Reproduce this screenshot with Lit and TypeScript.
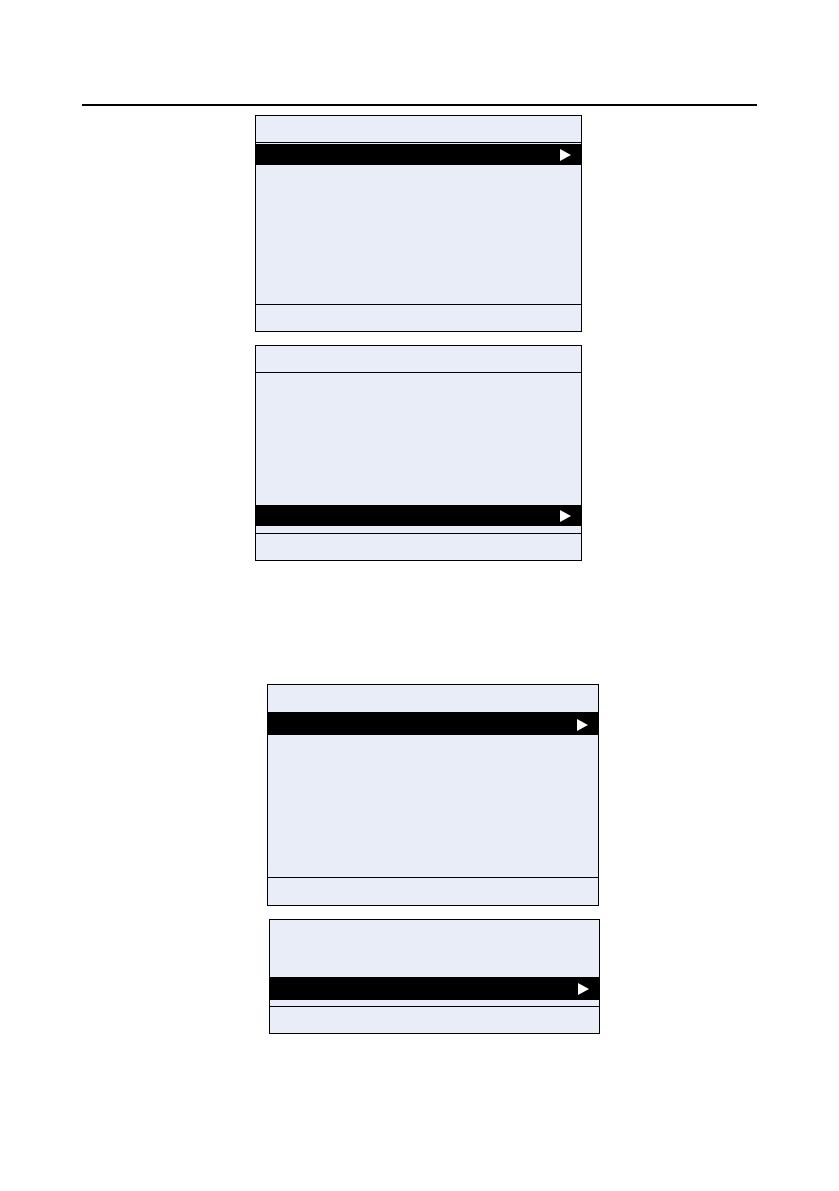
import { LitElement, html, css, nothing } from "lit";
import { customElement, property } from "lit/decorators.js";

/** One menu display: optional title bar, a list with a highlighted row, a softkey bar. */
@customElement("menu-display")
class MenuDisplay extends LitElement {
  @property({ type: Boolean }) titled = false;
  @property() label = "";

  static styles = css`
    :host {
      display: flex;
      flex-direction: column;
      box-sizing: border-box;
      border: 1px solid #000;
      background: #e8edf8;
    }
    .title {
      height: var(--title-height, 26px);
      border-bottom: 1px solid #000;
    }
    .before {
      height: var(--before, 0);
    }
    .after {
      height: var(--after, 0);
    }
    .softkeys {
      height: var(--softkeys-height, 26px);
      border-top: 1px solid #000;
    }
    .row {
      display: flex;
      align-items: center;
      justify-content: flex-end;
      width: 100%;
      height: var(--row-height, 21px);
      margin: 0;
      padding: 0 10px;
      border: 0;
      background: #000;
      color: #fff;
    }
    .arrow {
      display: block;
      width: 11px;
      height: 13px;
      fill: currentColor;
    }
  `;

  render() {
    return html`
      ${this.titled ? html`<header class="title"></header>` : nothing}
      <div class="before"></div>
      <button class="row" type="button" aria-label=${this.label}>
        <svg class="arrow" viewBox="0 0 11 13" aria-hidden="true">
          <path d="M0 1 11 7 0 13z" />
        </svg>
      </button>
      <div class="after"></div>
      <footer class="softkeys"></footer>
    `;
  }
}

@customElement("app-root")
class AppRoot extends LitElement {
  static styles = css`
    :host {
      display: block;
      box-sizing: border-box;
      min-height: 100vh;
      padding: 104px 82px 157px;
      background: #fff;
      font-family: "Liberation Sans", Arial, sans-serif;
    }
    .rule {
      height: 2px;
      margin: 0 0 9px;
      border: 0;
      background: #000;
    }
    .group {
      display: flex;
      flex-direction: column;
      gap: 13px;
      margin: 0 auto;
    }
    .primary {
      max-width: 327px;
      padding-right: 2px;
    }
    .secondary {
      max-width: 333px;
      margin-top: 123px;
      padding-left: 28px;
    }
    .first {
      --before: 1px;
      --after: 139px;
    }
    .last {
      --before: 132px;
      --after: 7px;
    }
    .wide {
      --title-height: 27px;
      --row-height: 22px;
      --after: 142px;
      --softkeys-height: 27px;
      margin-right: 1px;
    }
    .short {
      --before: 57px;
      --row-height: 23px;
      --after: 6px;
      margin-left: 2px;
    }
  `;

  render() {
    return html`
      <main>
        <hr class="rule" />
        <section class="group primary">
          <menu-display class="first" titled label="Open first item"></menu-display>
          <menu-display class="last" titled label="Open last item"></menu-display>
        </section>
        <section class="group secondary">
          <menu-display class="wide" titled label="Open first item"></menu-display>
          <menu-display class="short" label="Open last item"></menu-display>
        </section>
      </main>
    `;
  }
}
